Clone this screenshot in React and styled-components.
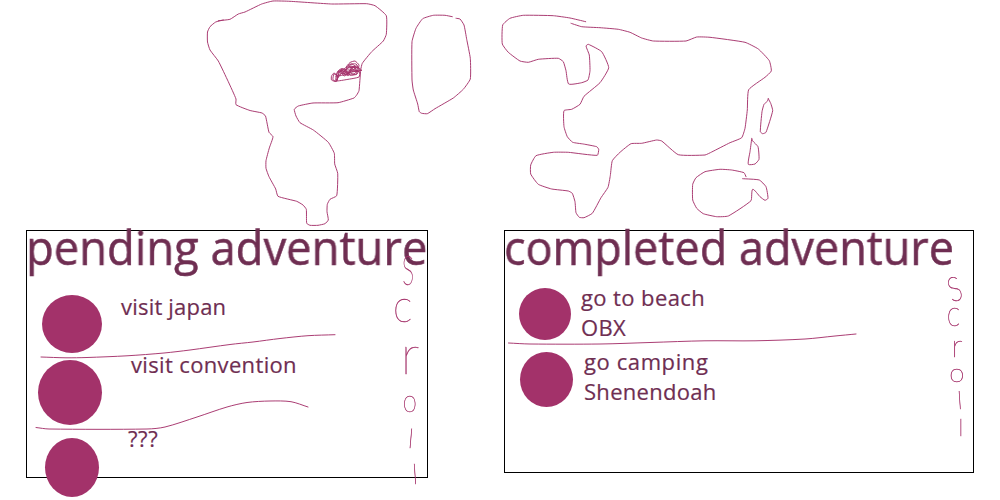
import React from "react";
import styled, { createGlobalStyle } from "styled-components";

const GlobalStyle = createGlobalStyle`
  * { box-sizing: border-box; }
  html, body { margin: 0; padding: 0; background: #fff; }
  body { overflow: hidden; font-family: "Open Sans", "Noto Sans", sans-serif; color: #6f2e52; }
`;

const Page = styled.main`
  width: 1000px;
  height: 500px;
  display: flex;
  flex-direction: column;
  overflow: hidden;
`;

const Drawing = styled.svg`
  display: block;
  flex: none;
  fill: none;
  stroke: #a5336b;
  stroke-width: 0.95;
  stroke-linecap: round;
  stroke-linejoin: round;
  overflow: visible;
`;

const Panels = styled.section`
  display: flex;
  align-items: flex-start;
  gap: 76px;
  padding-left: 26px;
`;

const Panel = styled.article`
  width: ${(p) => p.$w}px;
  height: ${(p) => p.$h}px;
  flex: none;
  border: 1px solid #000;
`;

const Title = styled.h1`
  margin: -8px 0 0;
  height: 65px;
  font-size: 47.5px;
  line-height: 48px;
  font-weight: 400;
  white-space: nowrap;
  -webkit-text-stroke: 0.5px #6f2e52;
  transform: translateX(-1px) scaleX(${(p) => p.$fit});
  transform-origin: 0 0;
  will-change: transform;
`;

const Body = styled.div`
  display: flex;
  justify-content: space-between;
`;

const List = styled.div`
  display: flex;
  flex-direction: column;
`;

const Item = styled.div`
  display: flex;
  align-items: flex-start;
  height: ${(p) => p.$h}px;
  padding: ${(p) => p.$top}px 0 0 ${(p) => p.$left}px;
`;

const Dot = styled.div`
  flex: none;
  width: ${(p) => p.$w}px;
  height: ${(p) => p.$h}px;
  border-radius: 50%;
  background: #a3326a;
`;

const Label = styled.div`
  margin: ${(p) => p.$top}px 0 0 ${(p) => p.$left}px;
  font-size: 22px;
  line-height: 30px;
  white-space: nowrap;
  -webkit-text-stroke: 0.2px #6f2e52;
`;

const Line = styled.div`
  letter-spacing: ${(p) => p.$spacing || 0}px;
`;

const Rule = styled(Drawing)`
  width: 1px;
  height: 1px;
  margin-bottom: -1px;
`;

const ScrollColumn = styled.div`
  display: flex;
  flex-direction: column;
  align-items: center;
  flex: none;
  width: 30px;
  margin: ${(p) => p.$top}px ${(p) => p.$right}px 0 0;
  will-change: transform;
`;

const Letter = styled.span`
  display: block;
  height: ${(p) => p.$h}px;
  line-height: ${(p) => p.$h}px;
  margin-bottom: ${(p) => p.$gap || 0}px;
  font-family: Lato, sans-serif;
  font-weight: 100;
  font-size: ${(p) => p.$size}px;
  color: #a5336b;
  -webkit-text-stroke: 0.4px #a5336b;
  transform: translate(${(p) => p.$x || 0}px, ${(p) => p.$y || 0}px) rotate(${(p) => p.$tilt || 0}deg) scaleX(${(p) => p.$sx || 1});
`;

const outlines = [
  "223.3,20 215.7,22 210,26.7 207.5,32 207.5,42 210,50 218.3,61 228.3,81.7 236,99 236,104.7 250,110.5 262,113 265.5,116 269,132.3 273,136.7 269.3,148 266,160.7 266,168.3 269,176.7 275.7,189 278,196.3 296.7,201.3 303,205 306.3,209.3 306.7,223.3 310,225.3 318,225.3 325,223.7 328.3,220 327,211.7 327.3,204.3 330,199.3 336.7,195.7 337.7,173.3 334.7,164 334.3,153.3 328.3,142.3 313.3,130 300,122.7 296,116 294.3,109.3 298.3,106 313,103 338,102.7 354,98 356.7,95 359,90.7 360.7,70 362.3,63.3 371.7,51.7 383.3,41 386.3,34.3 386.3,15.7 375,5.7 366.7,3.7 331.7,4 290,1.3 273,1 261.7,4 245,12 238.3,14 230,19.3 218.3,20.7",
  "452.3,16.7 445,15.3 433.3,15.3 422.7,18.7 416,28.3 412,41.7 412,80 413.3,90 417.7,104 419.3,111.7 421.7,113.3 427.3,113.7 435,108.7 453.3,98 463.3,89.3 470.3,79 470.3,58.3 466.7,39.3 464,25 460,19 456,18.3",
  "585.7,21.7 570,18 553.3,15.7 523.3,15.3 510,18.3 502.7,25 502.3,44 508.3,52.3 520,61 528.3,62.3 538.3,59.3 558.3,58.3 563.3,61.7 566,70.7 568.7,84 581.7,82.7 588,80 590,70.7 589.3,55 586,46 588.3,44.3 601.7,51.7 608.7,67.7 600,82.7 584,96.3 580,104.3 571.7,109.3 564,110.7 564,126.7 567.3,136.7 572.7,142.3 583.3,144 596.7,146.7 598.7,149.3 597.3,155.3 568.3,152.3 553.3,152.3 536,155.7 530.7,165 530.7,174 538.3,184.3 551.7,189 568.3,191 572.3,193.3 575,201.7 576,212.7 579.3,217.3 584,217.7 592.3,213.3 601,197.7 608,187.3 610.3,175.7 612.3,160.7 620,152.3 631,143.7 641.7,143.3 656.7,140 661.7,141 678.3,154.7 705,155 711.7,152 730,142.7 741.7,137.7 745,128.3 747.3,110 748.7,89.7 765,77.3 771.3,71 769.3,60.7 758.3,49 745,42.3 710,37.3 696.7,37 686,41 653.3,41 641.7,38 630,32.3 618.3,29.3 600,27.7 581.7,26.7 571,23.3",
  "768.3,98.7 767.3,101.3 764,104.3 762,111.7 760.3,131.7 762.7,133.7 766,132.3 772.7,110.7 770.7,103.3 768.3,98.7",
  "751.7,138.3 752.7,141 758,146.7 759,159.3 755,164 748.3,164.3 750,151.7 751.7,139",
  "746,176.7 744,172.7 731.7,170 720,169.3 705,171.7 696,177.7 692.7,184.3 692.7,200 696.7,208.3 703.3,213.7 716.7,216.7 728.3,216 751,200.7 752.7,189.3 760,196.7 765,200.3 768,198.3 766,186.7 759.3,180 742.7,178.7",
  "361.5,70.5 352,72 345,74.5 338,76 334,73 331.5,76 331.5,80 336,81.5 338,76 334,74 333,80 337,81 339,70 343,68.5 350,75 358,73 354,67 346,68 350,62.5 355,61 359,65 358,68 352,64 347,67 340,72 343,74 346,69 348,76 351,68 357,66 359,71 349,70 341,70 337,78 336,81 347,79.5 359,77 359.5,72 351,69 347,74 341,73 336,80 338,72 345,71 354,74 358,69 350,66 345,72 355,71 360,71 356,64 348,65 353,69 346,75 341,69 344,76 350,72 353,67 357,74 350,75 343,71 338,71 336,77 340,75 349,67 359,68 361.5,70",
];

/* Joins hand-placed points with a gently rounded line. */
function smooth(list, tension = 0.07) {
  const pts = list.split(" ").map((s) => s.split(",").map(Number));
  let d = `M${pts[0].join(" ")}`;
  for (let i = 0; i < pts.length - 1; i += 1) {
    const a = pts[i - 1] || pts[i];
    const b = pts[i];
    const c = pts[i + 1];
    const e = pts[i + 2] || c;
    const seg = Math.hypot(c[0] - b[0], c[1] - b[1]);
    const kb = (tension * 2 * seg) / (Math.hypot(c[0] - a[0], c[1] - a[1]) || 1);
    const kc = (tension * 2 * seg) / (Math.hypot(e[0] - b[0], e[1] - b[1]) || 1);
    d += `C${b[0] + (c[0] - a[0]) * kb} ${b[1] + (c[1] - a[1]) * kb} ${c[0] - (e[0] - b[0]) * kc} ${c[1] - (e[1] - b[1]) * kc} ${c[0]} ${c[1]}`;
  }
  return d;
}

function Divider({ points }) {
  return (
    <Rule aria-hidden="true">
      <path d={smooth(points, 0.15)} />
    </Rule>
  );
}

export default function App() {
  return (
    <Page>
      <GlobalStyle />
      <Drawing width="1000" height="230" viewBox="0 0 1000 230" aria-label="World map">
        {outlines.map((o) => (
          <path key={o} d={smooth(o)} />
        ))}
      </Drawing>
      <Panels>
        <Panel $w={402} $h={248}>
          <Title $fit={0.955}>pending adventure</Title>
          <Body>
            <List>
              <Item $h={69} $top={7} $left={15}>
                <Dot $w={60} $h={58} />
                <Label $left={19} $top={-4}><Line $spacing={0.2}>visit japan</Line></Label>
              </Item>
              <Divider points="14,0 39,0.8 60,0.5 100,-1.2 137,-4 163,-7 203,-12.5 226,-15 253,-18.5 281,-21.3 308,-22.3" />
              <Item $h={72} $top={3} $left={11}>
                <Dot $w={64} $h={65} />
                <Label $left={29} $top={-11}><Line $spacing={0.35}>visit convention</Line></Label>
              </Item>
              <Divider points="9,-1.5 22,0 120,0 138,-2 170,-12 200,-22 220,-26.5 243,-28 264,-27.3 281,-22" />
              <Item $h={68} $top={9} $left={18}>
                <Dot $w={54} $h={59} />
                <Label $left={29} $top={-15}><Line $spacing={0.6}>???</Line></Label>
              </Item>
            </List>
            <ScrollColumn $top={-34} $right={2}>
              <Letter $h={33} $gap={11} $size={58} $sx={0.5} $x={-2} $y={-8}>s</Letter>
              <Letter $h={25} $gap={23} $size={46} $sx={0.9} $x={-7} $y={-6}>c</Letter>
              <Letter $h={29} $gap={20} $size={54} $y={-7}>r</Letter>
              <Letter $h={17} $gap={16} $size={32} $sx={0.8} $y={-4}>o</Letter>
              <Letter $h={20} $gap={15} $size={27} $tilt={5} $x={1}>l</Letter>
              <Letter $h={21} $size={28} $tilt={-4} $x={5}>l</Letter>
            </ScrollColumn>
          </Body>
        </Panel>
        <Panel $w={470} $h={243}>
          <Title $fit={0.947}>completed adventure</Title>
          <Body>
            <List>
              <Item $h={56} $top={0} $left={14}>
                <Dot $w={52} $h={52} />
                <Label $left={10} $top={-6}><Line $spacing={0.4}>go to beach</Line><Line $spacing={0.3}>OBX</Line></Label>
              </Item>
              <Divider points="3.5,-1 25,0 95,0 145,-1.5 200,-3.2 250,-3.2 300,-5 330,-8 351,-10" />
              <Item $h={64} $top={8} $left={15}>
                <Dot $w={53} $h={55} />
                <Label $left={11} $top={-6}><Line $spacing={0.6}>go camping</Line><Line $spacing={0.3}>Shenendoah</Line></Label>
              </Item>
            </List>
            <ScrollColumn $top={-12} $right={2}>
              <Letter $h={26} $gap={6} $size={48} $sx={0.7} $tilt={-15} $x={-3} $y={-6}>s</Letter>
              <Letter $h={19} $gap={13} $size={36} $sx={0.8} $x={-3} $y={-5}>c</Letter>
              <Letter $h={17} $gap={12} $size={32} $x={1} $y={-4}>r</Letter>
              <Letter $h={13} $gap={8} $size={25} $sx={1.1} $x={1} $y={-3}>o</Letter>
              <Letter $h={18} $gap={11} $size={25} $tilt={-4} $x={4}>l</Letter>
              <Letter $h={17} $size={23} $x={5}>l</Letter>
            </ScrollColumn>
          </Body>
        </Panel>
      </Panels>
    </Page>
  );
}
